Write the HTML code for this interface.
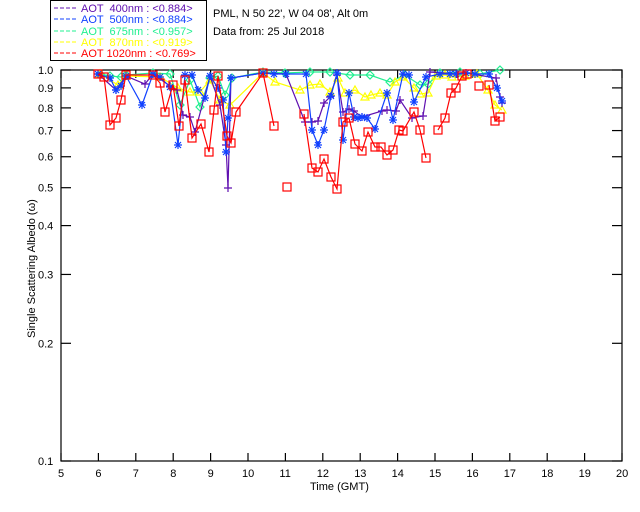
<!DOCTYPE html>
<html><head><meta charset="utf-8"><style>
html,body{margin:0;padding:0;background:#fff;width:640px;height:512px;overflow:hidden}
svg{display:block}
text{font-family:"Liberation Sans",sans-serif;font-size:11px;white-space:pre}
</style></head><body>
<svg id="s" width="640" height="512" xmlns="http://www.w3.org/2000/svg">
<rect x="50.5" y="0.5" width="156" height="60" fill="none" stroke="#000"/>
<g font-size="11">
<line x1="54" y1="8" x2="76" y2="8" stroke="#6010b0" stroke-dasharray="4,2"/><text x="81" y="12" fill="#6010b0">AOT  400nm : &lt;0.884&gt;</text>
<line x1="54" y1="19" x2="76" y2="19" stroke="#1040ff" stroke-dasharray="4,2"/><text x="81" y="23" fill="#1040ff">AOT  500nm : &lt;0.884&gt;</text>
<line x1="54" y1="31" x2="76" y2="31" stroke="#20f090" stroke-dasharray="4,2"/><text x="81" y="35" fill="#20f090">AOT  675nm : &lt;0.957&gt;</text>
<line x1="54" y1="42" x2="76" y2="42" stroke="#ffff00" stroke-dasharray="4,2"/><text x="81" y="46" fill="#ffff00">AOT  870nm : &lt;0.919&gt;</text>
<line x1="54" y1="53" x2="76" y2="53" stroke="#ff0000" stroke-dasharray="4,2"/><text x="81" y="57" fill="#ff0000">AOT 1020nm : &lt;0.769&gt;</text>
</g>
<text x="213" y="17">PML, N 50 22', W 04 08', Alt 0m</text>
<text x="213" y="35">Data from: 25 Jul 2018</text>
<text x="310" y="490">Time (GMT)</text>
<text transform="translate(35,338) rotate(-90)">Single Scattering Albedo (ω)</text>
<g id="ax" stroke="#000" fill="none" stroke-width="1.2"></g>
<g id="d"></g>
</svg>
<script>
var ns="http://www.w3.org/2000/svg",s=document.getElementById('s'),ax=document.getElementById('ax'),dg=document.getElementById('d');
function el(p,t,a){var e=document.createElementNS(ns,t);for(var k in a)e.setAttribute(k,a[k]);p.appendChild(e);return e;}
var L=61,R=622,T=70,B=461,D=391;
el(ax,'rect',{x:L,y:T,width:R-L,height:B-T});
for(var h=5;h<=20;h++){var x=L+(h-5)*37.4;el(ax,'line',{x1:x,y1:B,x2:x,y2:B-8});el(ax,'line',{x1:x,y1:T,x2:x,y2:T+8});
 var t=el(s,'text',{x:x-(h>=10?6:3),y:477});t.textContent=h;}
var yl=[[0.1,'0.1'],[0.2,'0.2'],[0.3,'0.3'],[0.4,'0.4'],[0.5,'0.5'],[0.6,'0.6'],[0.7,'0.7'],[0.8,'0.8'],[0.9,'0.9'],[1,'1.0']];
yl.forEach(function(v){var y=T-D*Math.log10(v[0]);el(ax,'line',{x1:L,y1:y,x2:L+10,y2:y});el(ax,'line',{x1:R,y1:y,x2:R-10,y2:y});
 var t=el(s,'text',{x:38,y:y+4});t.textContent=v[1];});
function ser(pts,col,mk){var g=el(dg,'g',{stroke:col,fill:'none','stroke-width':1.2});
 el(g,'polyline',{points:pts.map(function(p){return p.join(',')}).join(' ')});
 pts.forEach(function(p){var x=p[0],y=p[1];
  if(mk=='sq')el(g,'rect',{x:x-4,y:y-4,width:8,height:8});
  else if(mk=='tri')el(g,'path',{d:'M'+x+','+(y-4)+'L'+(x+4)+','+(y+3)+'L'+(x-4)+','+(y+3)+'Z'});
  else if(mk=='dia')el(g,'path',{d:'M'+x+','+(y-4)+'L'+(x+4)+','+y+'L'+x+','+(y+4)+'L'+(x-4)+','+y+'Z'});
  else if(mk=='plus')el(g,'path',{d:'M'+(x-4)+','+y+'H'+(x+4)+'M'+x+','+(y-4)+'V'+(y+4)});
  else el(g,'path',{d:'M'+(x-4)+','+y+'H'+(x+4)+'M'+x+','+(y-4)+'V'+(y+4)+'M'+(x-3)+','+(y-3)+'L'+(x+3)+','+(y+3)+'M'+(x+3)+','+(y-3)+'L'+(x-3)+','+(y+3)});
 });}
ser([[100,74],[110,76],[121,77],[126,75],[153,73],[170,74],[180,105],[190,80],[200,107],[210,78],[218,76],[225,95],[232,78],[263,72],[285,73],[310,72],[330,72],[350,75],[370,75],[390,82],[405,75],[420,85],[428,84],[440,73],[460,72],[480,74],[500,70]],'#20f090','dia');
ser([[100,74],[118,85],[126,76],[160,77],[178,88],[190,92],[200,92],[210,80],[220,100],[230,105],[263,73],[275,82],[300,90],[310,85],[320,84],[330,92],[338,78],[345,93],[355,90],[365,97],[371,95],[380,93],[387,95],[395,82],[403,77],[414,88],[420,94],[428,93],[436,76],[445,75],[452,77],[465,76],[477,74],[488,90],[495,105],[502,110]],'#ffff00','tri');
ser([[98,74],[116,90],[126,76],[145,84],[153,74],[170,86],[177,90],[183,115],[190,117],[195,132],[210,76],[220,105],[226,145],[228,188],[231,78],[263,73],[286,74],[305,122],[312,122],[318,121],[324,103],[330,97],[337,75],[343,112],[349,109],[354,111],[362,117],[382,111],[387,110],[396,111],[400,100],[412,118],[423,116],[430,72],[457,74],[466,73],[496,78],[500,97],[502,103]],'#6010b0','plus');
ser([[98,74],[110,78],[116,90],[121,86],[126,76],[142,105],[153,74],[160,77],[170,87],[178,145],[185,75],[192,75],[198,90],[205,98],[210,76],[218,88],[223,100],[226,152],[228,118],[231,78],[263,73],[274,74],[286,74],[306,74],[312,130],[318,145],[324,130],[331,96],[337,73],[343,140],[349,93],[354,117],[358,118],[362,117],[367,118],[375,129],[387,93],[393,120],[403,74],[409,75],[414,102],[426,77],[440,74],[450,74],[456,74],[466,73],[475,74],[489,74],[497,88],[502,101]],'#1040ff','star');
ser([[98,74],[104,77],[110,125],[116,118],[121,100],[126,75],[153,75],[160,83],[165,112],[173,85],[179,126],[185,80],[192,138],[201,124],[209,152],[214,110],[218,76],[227,136],[231,143],[236,112],[263,73],[274,126]],'#ff0000','sq');
ser([[287,187]],'#ff0000','sq');
ser([[304,114],[312,168],[318,172],[324,159],[331,177],[337,189],[343,122],[349,118],[355,144],[362,151],[368,132],[375,147],[381,147],[387,155],[393,150],[399,130],[403,131],[414,112],[420,130],[426,158]],'#ff0000','sq');
ser([[438,130],[445,118],[451,93],[456,88],[462,76],[467,74]],'#ff0000','sq');
ser([[479,86]],'#ff0000','sq');
ser([[489,85],[495,121],[500,117]],'#ff0000','sq');
</script>
</body></html>
